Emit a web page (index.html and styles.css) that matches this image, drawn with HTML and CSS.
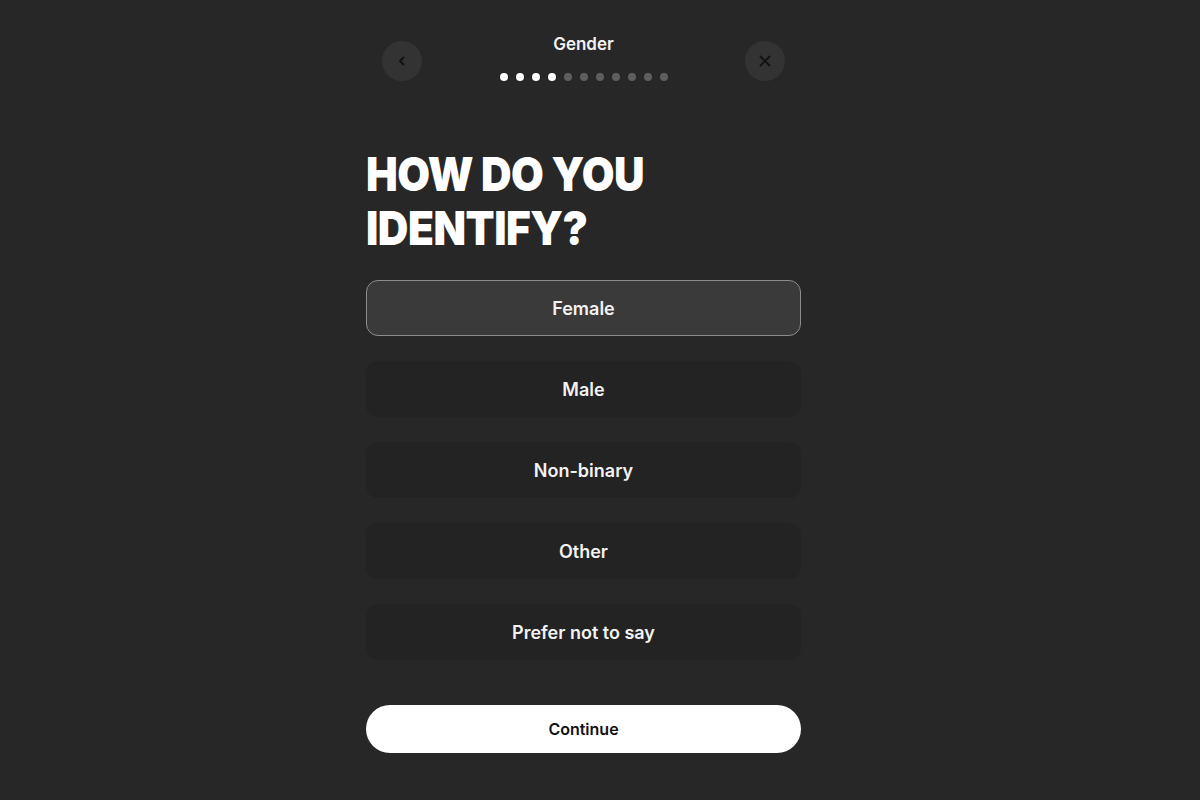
FILE: index.html
```html
<!DOCTYPE html>
<html lang="en">
<head>
    <meta charset="UTF-8">
    <meta name="viewport" content="width=device-width, initial-scale=1.0">
    <title>Gender</title>
    <link rel="stylesheet" href="styles.css">
</head>
<body>
    <div class="screen">
        <div class="header">
            <button class="round-btn">
                <svg width="12" height="12" viewBox="0 0 12 12"><path d="M7.5 2.5 L4 6 L7.5 9.5" fill="none" stroke="#111" stroke-width="1.8" stroke-linecap="round" stroke-linejoin="round"/></svg>
            </button>
            <div class="header-center">
                <div class="header-title">Gender</div>
                <div class="dots">
                    <span class="dot active"></span>
                    <span class="dot active"></span>
                    <span class="dot active"></span>
                    <span class="dot active"></span>
                    <span class="dot"></span>
                    <span class="dot"></span>
                    <span class="dot"></span>
                    <span class="dot"></span>
                    <span class="dot"></span>
                    <span class="dot"></span>
                    <span class="dot"></span>
                </div>
            </div>
            <button class="round-btn">
                <svg width="14" height="14" viewBox="0 0 14 14"><path d="M2.5 2.5 L11.5 11.5 M11.5 2.5 L2.5 11.5" fill="none" stroke="#111" stroke-width="1.8" stroke-linecap="round"/></svg>
            </button>
        </div>

        <h1>HOW DO YOU<br>IDENTIFY?</h1>

        <div class="options">
            <div class="option selected">Female</div>
            <div class="option">Male</div>
            <div class="option">Non-binary</div>
            <div class="option">Other</div>
            <div class="option">Prefer not to say</div>
        </div>

        <button class="continue-btn">Continue</button>
    </div>
</body>
</html>
```

FILE: styles.css
```css
body {
    margin: 0;
    background: #272727;
    font-family: Inter, "Noto Sans", sans-serif;
    color: #f2f2f2;
}
.screen {
    width: 435px;
    margin-left: 366px;
    padding-top: 33px;
}
.header {
    display: flex;
    justify-content: space-between;
    align-items: flex-start;
    padding: 0 16px;
}
.round-btn {
    width: 40px;
    height: 40px;
    margin-top: 8px;
    border: none;
    border-radius: 50%;
    background: #333333;
    display: flex;
    align-items: center;
    justify-content: center;
    padding: 0;
}
.header-center {
    display: flex;
    flex-direction: column;
    align-items: center;
}
.header-title {
    font-size: 17px;
    font-weight: 600;
    line-height: 22px;
}
.dots {
    display: flex;
    gap: 8px;
    margin-top: 18px;
}
.dot {
    width: 8px;
    height: 8px;
    border-radius: 50%;
    background: #5e5e5e;
}
.dot.active {
    background: #ffffff;
}
h1 {
    margin: 66px 0 25px 0;
    font-size: 47px;
    font-weight: 900;
    line-height: 54px;
    letter-spacing: -0.5px;
    color: #ffffff;
    transform: scaleX(0.9);
    transform-origin: left;
}
.options {
    display: flex;
    flex-direction: column;
    gap: 25px;
}
.option {
    height: 56px;
    border-radius: 12px;
    background: #232323;
    display: flex;
    align-items: center;
    justify-content: center;
    font-size: 18px;
    font-weight: 600;
    box-sizing: border-box;
}
.option.selected {
    background: #3a3a3a;
    border: 1px solid #8c8c8c;
}
.continue-btn {
    display: block;
    width: 100%;
    height: 48px;
    margin-top: 45px;
    border: none;
    border-radius: 24px;
    background: #ffffff;
    color: #111111;
    font-family: Inter, "Noto Sans", sans-serif;
    font-size: 16px;
    font-weight: 600;
}
```
